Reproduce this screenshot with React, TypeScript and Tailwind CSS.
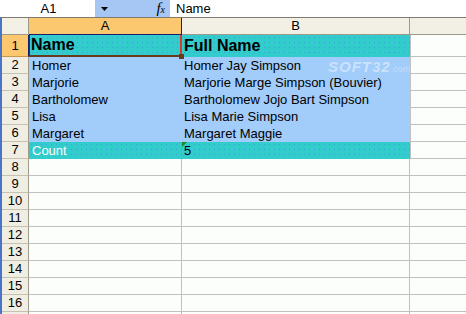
import React from "react";

interface DataRow {
  n: number;
  a: string;
  b: string;
}

const dataRows: DataRow[] = [
  { n: 2, a: "Homer", b: "Homer Jay Simpson" },
  { n: 3, a: "Marjorie", b: "Marjorie Marge Simpson (Bouvier)" },
  { n: 4, a: "Bartholomew", b: "Bartholomew Jojo Bart Simpson" },
  { n: 5, a: "Lisa", b: "Lisa Marie Simpson" },
  { n: 6, a: "Margaret", b: "Margaret Maggie" },
];

// row 17 is only peeking in at the bottom edge, so it gets no label
const emptyRows = [8, 9, 10, 11, 12, 13, 14, 15, 16, 0];

const RowHead: React.FC<{ n: number; h: string; selected?: boolean }> = ({
  n,
  h,
  selected,
}) => (
  <div
    className={`${h} w-[27px] shrink-0 flex items-center justify-center border-r border-b text-[13px] text-black ${
      selected
        ? "bg-[#fbc870] border-r-[#1c1c6c] border-b-[#c89850]"
        : "bg-[#f0eee2] border-r-[#9d9a8c] border-b-[#c5c2b2]"
    }`}
  >
    {n > 0 ? n : null}
  </div>
);

const cyanDots =
  "bg-[#33cccc] bg-[radial-gradient(circle,#3f9fd8_0.7px,transparent_0.8px)] bg-size-[5px_5px]";

const App: React.FC = () => {
  return (
    <div className="w-[466px] h-[314px] overflow-hidden bg-[#fcfefc] font-['Liberation_Sans',Arial,sans-serif] relative">
      {/* formula bar */}
      <div className="flex h-[17px] text-[13px] text-black">
        <div className="w-[95px] bg-white flex items-center justify-center pl-[2px]">
          A1
        </div>
        <div className="w-[75px] bg-[#a6c6f4] flex items-center">
          <svg width="7" height="4" viewBox="0 0 7 4" className="ml-[6px]">
            <path d="M0 0 H7 L3.5 4 Z" fill="#000" />
          </svg>
          <span className="ml-auto mr-[5px] italic font-['Liberation_Serif',serif] text-[15px] leading-none">
            f<span className="text-[10px]">x</span>
          </span>
        </div>
        <div className="flex-1 bg-white flex items-center pl-[6px]">Name</div>
      </div>

      {/* sheet */}
      <div className="border-t border-[#7f7c6f] border-l-2 border-l-[#4a74c8]">
        {/* column headers */}
        <div className="flex h-[17px] text-[13px] text-black">
          <div className="w-[27px] shrink-0 bg-[#f3f1e6] border-r border-b border-[#9d9a8c]" />
          <div className="w-[153px] shrink-0 bg-[#fbc870] border-r border-b border-[#1c1c6c] flex items-center justify-center">
            A
          </div>
          <div className="w-[228px] shrink-0 bg-[#f2efe4] border-r border-b border-[#9d9a8c] flex items-center justify-center">
            B
          </div>
          <div className="flex-1 bg-[#f2efe4] border-b border-[#9d9a8c]" />
        </div>

        {/* row 1 */}
        <div className="flex h-[22px]">
          <RowHead n={1} h="h-[22px]" selected />
          <div
            className={`relative w-[153px] shrink-0 ${cyanDots} border-l border-l-[#5a1a4a] border-r-2 border-r-[#d83a30] border-b-2 border-b-[#6a3a1c] flex items-center pl-[1px] text-[16px] font-bold text-black`}
          >
            Name
            <div className="absolute right-[-4px] bottom-[-4px] w-[5px] h-[5px] bg-[#6a3a1c]" />
          </div>
          <div
            className={`w-[228px] shrink-0 ${cyanDots} flex items-center pl-[2px] text-[16px] font-bold text-black`}
          >
            Full Name
          </div>
          <div className="flex-1 border-l border-b border-[#c0c0c0]" />
        </div>

        {/* rows 2-6 */}
        {dataRows.map((r) => (
          <div key={r.n} className="flex h-[17px] text-[13px] text-black">
            <RowHead n={r.n} h="h-[17px]" />
            <div className="w-[153px] shrink-0 bg-[#a2ccfa] flex items-center pl-[3px]">
              {r.a}
            </div>
            <div className="w-[228px] shrink-0 bg-[#a2ccfa] flex items-center pl-[2px]">
              {r.b}
            </div>
            <div className="flex-1 border-l border-b border-[#c0c0c0]" />
          </div>
        ))}

        {/* row 7 */}
        <div className="flex h-[17px] text-[13px]">
          <RowHead n={7} h="h-[17px]" />
          <div className={`w-[153px] shrink-0 ${cyanDots} flex items-center pl-[3px] text-white`}>
            Count
          </div>
          <div className={`relative w-[228px] shrink-0 ${cyanDots} flex items-center pl-[2px] text-black`}>
            <svg width="5" height="5" viewBox="0 0 5 5" className="absolute left-0 top-0">
              <path d="M0 0 H5 L0 5 Z" fill="#1a8a2a" />
            </svg>
            5
          </div>
          <div className="flex-1 border-l border-b border-[#c0c0c0]" />
        </div>

        {/* empty rows */}
        {emptyRows.map((n, i) => (
          <div key={i} className="flex h-[17px]">
            <RowHead n={n} h="h-[17px]" />
            <div className="w-[153px] shrink-0 border-r border-b border-[#c0c0c0]" />
            <div className="w-[228px] shrink-0 border-r border-b border-[#c0c0c0]" />
            <div className="flex-1 border-b border-[#c0c0c0]" />
          </div>
        ))}
      </div>

      {/* watermark */}
      <div className="absolute left-[328px] top-[56px] flex items-baseline italic font-bold text-white/45 select-none">
        <span className="text-[15px] tracking-[1px]">SOFT32</span>
        <span className="text-[9px] not-italic font-normal text-white/35">.com</span>
      </div>
    </div>
  );
};

export default App;
